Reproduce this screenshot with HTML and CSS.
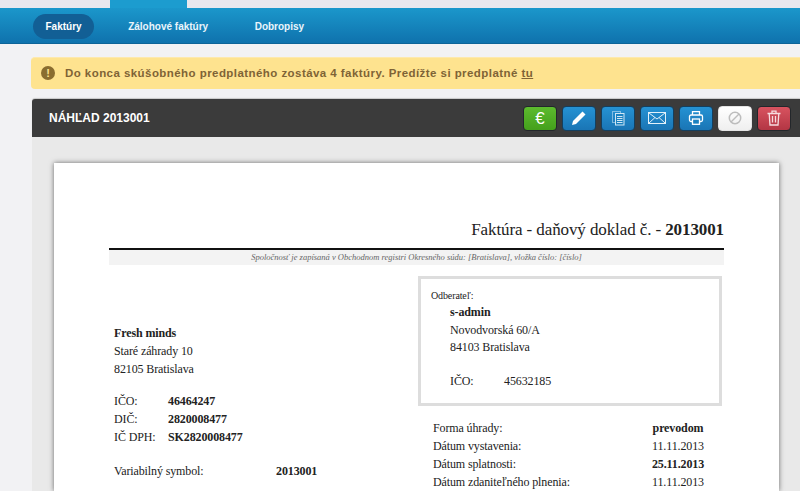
FILE: index.html
```html
<!DOCTYPE html>
<html lang="sk">
<head>
    <meta charset="UTF-8">
    <title>Náhľad 2013001</title>
    <link rel="stylesheet" href="styles.css">
</head>
<body>

<div class="top-strip">
    <div class="top-tab"></div>
</div>

<nav class="main-nav">
    <a class="nav-item active">Faktúry</a>
    <a class="nav-item">Zálohové faktúry</a>
    <a class="nav-item">Dobropisy</a>
</nav>

<div class="content">
    <div class="alert">
        <span class="alert-icon">!</span>
        <span>Do konca skúšobného predplatného zostáva 4 faktúry. Predížte si predplatné <u>tu</u></span>
    </div>

    <div class="panel">
        <div class="panel-head">
            <h2>NÁHĽAD 2013001</h2>
            <div class="toolbar">
                <button class="btn btn-green"><span class="euro">€</span></button>
                <button class="btn btn-blue">
                    <svg width="16" height="16" viewBox="0 0 16 16"><path d="M1 15l1-4L11.500 1.500l3 3L5 14z" fill="#fff"/></svg>
                </button>
                <button class="btn btn-blue">
                    <svg width="16" height="16" viewBox="0 0 16 16" fill="none" stroke="#cfe6f5"><rect x="2.500" y="1.500" width="8" height="11" stroke-opacity=".55"/><rect x="5.500" y="3.500" width="8.500" height="11.500" fill="#1b81c0"/><path d="M7 6.500h5.500M7 8.500h5.500M7 10.500h5.500M7 12.500h5.500"/></svg>
                </button>
                <button class="btn btn-blue">
                    <svg width="18" height="14" viewBox="0 0 18 14" fill="none" stroke="#e3f1fa"><rect x=".5" y="1.500" width="17" height="11"/><path d="M1 2l8 6 8-6M1 12l6-5.500M17 12l-6-5.500"/></svg>
                </button>
                <button class="btn btn-blue">
                    <svg width="16" height="16" viewBox="0 0 16 16" fill="none" stroke="#fff" stroke-width="1.300"><path d="M4.500 5V1.700h7V5"/><rect x="1.500" y="5" width="13" height="6.500" rx="1.500"/><rect x="4.500" y="9" width="7" height="5.300" fill="#1b81c0"/></svg>
                </button>
                <button class="btn btn-white">
                    <svg width="14" height="14" viewBox="0 0 14 14" fill="none" stroke="#bdbdbd" stroke-width="1.500"><circle cx="7" cy="7" r="5.700"/><path d="M3 11l8-8"/></svg>
                </button>
                <button class="btn btn-red">
                    <svg width="14" height="16" viewBox="0 0 14 16" fill="none" stroke="#f6dcdf" stroke-width="1.300"><path d="M.5 3.500h13M5 3V1.200h4V3M2.200 3.500l.8 11.500h8l.8-11.500M5.500 6v6.500M8.500 6v6.500"/></svg>
                </button>
            </div>
        </div>

        <div class="panel-body">
            <div class="paper">
                <h1 class="doc-title">Faktúra - daňový doklad č. - <b>2013001</b></h1>
                <p class="registry">Spoločnosť je zapísaná v Obchodnom registri Okresného súdu: [Bratislava], vložka číslo: [číslo]</p>

                <div class="doc-columns">
                    <div class="supplier">
                        <div><b>Fresh minds</b></div>
                        <div>Staré záhrady 10</div>
                        <div>82105 Bratislava</div>

                        <div class="ids">
                            <div class="id-row"><span>IČO:</span><b>46464247</b></div>
                            <div class="id-row"><span>DIČ:</span><b>2820008477</b></div>
                            <div class="id-row"><span>IČ DPH:</span><b>SK2820008477</b></div>
                        </div>

                        <div class="var-symbol"><span>Variabilný symbol:</span><b>2013001</b></div>
                    </div>

                    <div class="customer-col">
                        <div class="customer">
                            <div class="customer-label">Odberateľ:</div>
                            <div class="customer-address">
                                <div><b>s-admin</b></div>
                                <div>Novodvorská 60/A</div>
                                <div>84103 Bratislava</div>
                                <div class="customer-ico"><span>IČO:</span>45632185</div>
                            </div>
                        </div>

                        <div class="dates">
                            <div class="date-row"><span>Forma úhrady:</span><b>prevodom</b></div>
                            <div class="date-row"><span>Dátum vystavenia:</span><span class="val">11.11.2013</span></div>
                            <div class="date-row"><span>Dátum splatnosti:</span><b>25.11.2013</b></div>
                            <div class="date-row"><span>Dátum zdaniteľného plnenia:</span><span class="val">11.11.2013</span></div>
                        </div>
                    </div>
                </div>
            </div>
        </div>
    </div>
</div>

</body>
</html>
```

FILE: styles.css
```css
html, body {
    margin: 0;
    height: 491px;
    overflow: hidden;
}

body {
    font-family: "Liberation Sans", Arial, sans-serif;
    background-color: #f2f2f4;
}

.top-strip {
    height: 8px;
    background-color: #e9e8ee;
    padding-left: 110px;
}

.top-tab {
    width: 77px;
    height: 8px;
    background-color: #1c9ccf;
}

.main-nav {
    height: 36px;
    display: flex;
    align-items: center;
    padding: 1px 0 0 33px;
    background: linear-gradient(#1b97cb, #0f72ad);
    border-bottom: 1px solid #0d6498;
    box-sizing: border-box;
}

.nav-item {
    height: 25px;
    line-height: 25px;
    padding: 0 12px;
    margin-right: 22.500px;
    border-radius: 13px;
    color: #eaf5fb;
    font-size: 10px;
    font-weight: bold;
}

.nav-item.active {
    padding: 0 12.500px;
    background-color: #125f95;
    color: #fff;
    margin-right: 22px;
}

.content {
    padding: 13px 0 0 31px;
}

.alert {
    height: 32px;
    display: flex;
    align-items: center;
    gap: 10px;
    padding: 0 0 1px 10px;
    background-color: #fee38f;
    border-top: 1px solid #fde9ad;
    box-sizing: border-box;
    border-radius: 4px 0 0 4px;
    color: #7f6336;
    font-size: 11.500px;
    font-weight: bold;
    letter-spacing: 0.440px;
}

.alert-icon {
    width: 14px;
    height: 14px;
    line-height: 14px;
    border-radius: 50%;
    background-color: #8a6d2f;
    color: #fee38f;
    font-size: 11px;
    letter-spacing: 0;
    text-align: center;
}

.panel {
    margin: 10px 0 0 1px;
}

.panel-head {
    height: 38px;
    display: flex;
    align-items: center;
    justify-content: space-between;
    padding: 0 9px 0 17px;
    background-color: #3b3b3b;
    border-radius: 3px 0 0 0;
    box-shadow: 0 -1px 1px #c8c8c8;
}

.panel-head h2 {
    margin: 0;
    color: #fff;
    font-size: 12px;
}

.toolbar {
    display: flex;
    gap: 5px;
}

.btn {
    width: 34px;
    height: 25px;
    padding: 0;
    display: flex;
    align-items: center;
    justify-content: center;
    border: 1px solid #23272b;
    border-radius: 4px;
}

.btn-green {
    background: linear-gradient(#5dbb2e, #44a01c);
}

.btn-blue {
    background: linear-gradient(#2592d3, #1a75b5);
    border-color: #143f5e;
}

.btn-white {
    background: linear-gradient(#ffffff, #efefef);
    border-color: #e4e4e4;
}

.btn-red {
    background: linear-gradient(#d8535f, #b33644);
}

.euro {
    color: #fff;
    font-size: 17px;
    line-height: 17px;
}

.panel-body {
    height: 354px;
    padding: 26px 21px 0 22px;
    box-sizing: border-box;
    overflow: hidden;
    background-color: #e9e9e9;
}

.paper {
    height: 328px;
    padding: 55px 55px 0 55px;
    box-sizing: border-box;
    background-color: #fff;
    box-shadow: 0 0 5px rgba(0,0,0,0.55);
    font-family: "Liberation Serif", "Times New Roman", serif;
    font-size: 12px;
    line-height: 18px;
    letter-spacing: -0.120px;
    color: #222;
}

.doc-title {
    margin: 0;
    height: 30px;
    line-height: 23px;
    border-bottom: 2px solid #111;
    font-size: 17px;
    font-weight: normal;
    letter-spacing: -0.100px;
    text-align: right;
    color: #222;
}

.registry {
    margin: 0;
    height: 15px;
    line-height: 15px;
    background-color: #f3f3f3;
    color: #666;
    font-size: 8.500px;
    font-style: italic;
    letter-spacing: 0;
    text-align: center;
}

.doc-columns {
    display: flex;
}

.supplier {
    width: 304px;
    padding: 59px 0 0 5px;
    box-sizing: border-box;
}

.ids {
    margin-top: 14px;
}

.id-row {
    display: flex;
}

.id-row span {
    width: 54px;
}

.var-symbol {
    display: flex;
    margin-top: 16px;
}

.var-symbol span {
    width: 162px;
}

.customer-col {
    width: 304px;
    margin-left: 5px;
    padding-top: 11px;
}

.customer {
    height: 130px;
    padding: 10px 10px 0 10px;
    border: 3px solid #ddd;
    box-sizing: border-box;
}

.customer-label {
    font-size: 10px;
    line-height: 14px;
}

.customer-address {
    margin-top: 1px;
    padding-left: 19px;
    line-height: 17.500px;
}

.customer-ico {
    margin-top: 16px;
}

.customer-ico span {
    display: inline-block;
    width: 54px;
}

.dates {
    margin-top: 13px;
    padding-left: 15px;
    width: 275px;
}

.date-row {
    display: flex;
    justify-content: space-between;
}

.date-row b, .date-row .val {
    width: 60px;
    text-align: center;
}
```
